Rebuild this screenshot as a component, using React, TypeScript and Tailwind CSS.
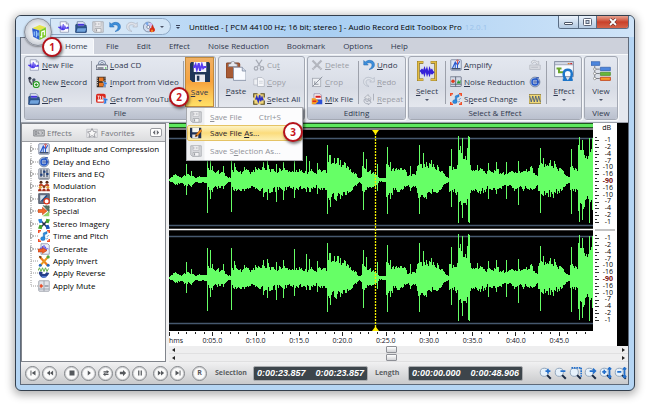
import type { ReactNode } from "react";

type IconProps = { name: string; className?: string };

const wave = "M2 8h1l1-2 1 4 1-6 1 8 1-9 1 9 1-7 1 5 1-3 1 1h1";

const ICONS: Record<string, ReactNode> = {
  logo: (
    <>
      <path d="M2 4l7-3 6 2-6 3z" fill="#e6e54a" />
      <path d="M2 4l7 2v9l-6-3z" fill="#2f5fd0" />
      <path d="M9 6l6-3v9l-6 3z" fill="#7ecb2a" />
      <path d="M4 7v4M6 6.500v6M7.500 8v3" stroke="#9fd0ff" fill="none" />
      <path d="M11 12V7.500l2.500-1v4" stroke="#fff" fill="none" />
      <circle cx="10.600" cy="12" r="1" fill="#fff" />
    </>
  ),
  newFile: (
    <>
      <path d="M3 1h8l3 3v11H3z" fill="#fafbff" stroke="#8b93ad" />
      <path d="M11 1v3h3" fill="#d5daea" stroke="#8b93ad" />
      <path d="M0 8h3l1-2 1 5 2-7 1 8 1-6 2 4 1-2h2v2h-4l-2 2H5z" fill="#4a35e8" stroke="#4a35e8" strokeWidth=".6" />
    </>
  ),
  open: (
    <>
      <path d="M3 1h8l2 2v6H3z" fill="#f4f6ff" stroke="#5f7396" />
      <path d="M4 5h8" stroke="#4433dd" strokeWidth="2.500" />
      <path d="M1 5l2-1v3h10V5l2 1v9H1z" fill="#315d9a" stroke="#1d3e70" />
      <path d="M1 15l2-6h13l-2 6z" fill="#6fa2dc" stroke="#1d3e70" />
    </>
  ),
  record: (
    <>
      <path d="M2 2v4c0 3 3 3 3 6M7 4v4c0 3 2 3 2 5" fill="none" stroke="#556" strokeWidth="2.200" />
      <circle cx="2.500" cy="3" r="2" fill="#333c4c" />
      <circle cx="8" cy="5" r="2" fill="#4a566a" />
      <circle cx="11" cy="11.500" r="4" fill="#fff" stroke="#279a22" strokeWidth="1.500" />
      <path d="M11 9.500v4M9 11.500h4" stroke="#279a22" strokeWidth="1.500" />
    </>
  ),
  cd: (
    <>
      <path d="M3 7a5 5 0 0110 0z" fill="#dfe8f5" stroke="#63718c" />
      <circle cx="8" cy="6" r="1.500" fill="#fff" stroke="#63718c" />
      <path d="M1 8h14l1 6H0z" fill="#eceff4" stroke="#4d566b" />
      <path d="M2 12h8" stroke="#333b4b" strokeWidth="1.500" />
      <circle cx="13" cy="12" r="1" fill="#2eb82e" />
    </>
  ),
  video: (
    <>
      <path d="M1 1h12v14H1z" fill="#3a2a22" />
      <path d="M4 2h6v5H4zM4 9h6v5H4z" fill="#e87722" />
      <path d="M2 2v12M12 2v12" stroke="#fff" strokeDasharray="1.500 1.500" />
      <path d="M9 7l6 2-1 3-1-1v3l-3 1 1-4z" fill="#2f7be0" stroke="#fff" strokeWidth=".5" />
    </>
  ),
  youtube: (
    <>
      <rect x="0" y="1" width="13" height="12" rx="2.500" fill="#d9281e" />
      <path d="M2 4h3M3.500 4v4M6 4v4M9 4v4" stroke="#fff" />
      <rect x="2" y="8.500" width="8" height="3" fill="#fff" />
      <path d="M9 6l7 2-1 3-1-1v4l-4 1 1-4z" fill="#2f7be0" stroke="#fff" strokeWidth=".5" />
    </>
  ),
  save: (
    <>
      <path d="M1 0h14l1 1v15H2l-2-2V1z" fill="#1f3658" />
      <path d="M3 0h10v8H3z" fill="#f4f4fb" />
      <path d="M2.500 4h1l1-2 1 4 1.500-5 1 6 1.500-5 1 3 1-1h1.500" fill="none" stroke="#5a3df0" strokeWidth="1.500" />
      <path d="M4 10h8v6H4z" fill="#e8e9ef" />
      <path d="M5.500 11h2v4h-2z" fill="#1f3658" />
    </>
  ),
  saveGray: (
    <>
      <path d="M1 1h14v14H3l-2-2z" fill="#d7d8dc" stroke="#a3a5ab" />
      <path d="M4 1h8v6H4z" fill="#f7f7f8" stroke="#b4b6bb" />
      <path d="M4 4h8" stroke="#a9abb1" strokeWidth="2" strokeDasharray="1 1" />
      <path d="M4 10h8v5H4z" fill="#f2f2f4" stroke="#a3a5ab" />
      <path d="M6 11v3" stroke="#96989f" strokeWidth="1.500" />
    </>
  ),
  saveAs: (
    <>
      <path d="M0 1h15v14H2l-2-2z" fill="#1f3154" />
      <path d="M3 1h9v6H3z" fill="#f6f5ef" />
      <path d="M3 10h8v5H3z" fill="#dfe1ea" />
      <path d="M7 13l1-3 6-7 2 2-6 7z" fill="#f08c1e" stroke="#8a4510" strokeWidth=".6" />
      <path d="M7 13l1-3 2 2z" fill="#42210b" />
    </>
  ),
  burn: (
    <>
      <circle cx="7" cy="8" r="6.500" fill="#cfdcf0" stroke="#6b7890" />
      <path d="M7 8L3 3a6 6 0 014-1.500z" fill="#7aa8e8" />
      <path d="M7 8l6-2a6 6 0 00-3-4z" fill="#d6b5ee" />
      <circle cx="7" cy="8" r="2" fill="#fff" stroke="#6b7890" />
      <path d="M11 15c-3-1-3-4-1-6 0 1 1 1 1 0 0-2 1-3 2-4 0 3 3 4 3 7 0 2-2 3-5 3z" fill="#d62d18" />
      <path d="M12 15c-2-1-1-3 0-4 1 1 2 3 0 4z" fill="#ffb02e" />
    </>
  ),
  undo: <path d="M1 2v6h6L5 6c3-2 7-1 7 2 0 2-1 4-4 6 6-1 8-4 7-8S8 0 3 4z" fill="#3d8fdb" stroke="#2367b0" strokeWidth=".7" />,
  redo: <path d="M15 2v6H9l2-2C8 4 4 5 4 8c0 2 1 4 4 6-6-1-8-4-7-8s7-6 12-2z" fill="#dfe3ea" stroke="#a9b0bd" strokeWidth=".8" />,
  repeat: (
    <>
      <path d="M7 2L2 6l5 3V7c2 0 3 1 2 4 3-4 1-7-2-7z" fill="#e2e4e9" stroke="#9da2ad" strokeWidth=".8" />
      <path d="M2 8c-2 4 1 7 5 6v2l4-4-4-3v2c-2 1-4 0-3-3zM14 1v9" fill="none" stroke="#9da2ad" />
    </>
  ),
  paste: (
    <>
      <rect x="0" y="1.500" width="11" height="12" rx="1" fill="#a85a34" stroke="#74371b" strokeWidth=".6" />
      <path d="M2 4.500V2.500L4 2c0-2.500 3-2.500 3 0l2 .5v2z" fill="#e6e8ee" stroke="#7d828d" strokeWidth=".6" />
      <path d="M6 5h7l3 3v7.500H6z" fill="#f9fbff" stroke="#8690a5" strokeWidth=".7" />
      <path d="M13 5v3h3" fill="#d3dbea" stroke="#8690a5" strokeWidth=".7" />
    </>
  ),
  cut: (
    <>
      <path d="M4 1l6 9M12 1L6 10" stroke="#a7abb5" strokeWidth="1.800" />
      <circle cx="4" cy="12.500" r="2.300" fill="none" stroke="#a7abb5" strokeWidth="1.600" />
      <circle cx="12" cy="12.500" r="2.300" fill="none" stroke="#a7abb5" strokeWidth="1.600" />
    </>
  ),
  copy: (
    <>
      <path d="M1 4h8v8H1z" fill="#eef0f4" stroke="#b6bac4" />
      <path d="M6 2h6l3 3v9H6z" fill="#f6f7fa" stroke="#b0b5c0" />
      <path d="M8 7h5M8 9.500h5" stroke="#c4c8d0" />
    </>
  ),
  selectAll: (
    <>
      <path d="M1 1h14v14H1z" fill="#f0d67a" />
      <path d="M3 8h1l1-3 2 6 2-8 1 8 2-5 1 3h1" stroke="#2a2fc4" fill="none" strokeWidth="2" />
      <path d="M1 6V1h5M10 1h5v5M1 10v5h5M15 10v5h-5" stroke="#5a4c1c" fill="none" strokeWidth="1.500" />
    </>
  ),
  del: <path d="M2 2l12 12M14 2L2 14" stroke="#b3b6be" strokeWidth="3" strokeDasharray="7 .5" />,
  crop: (
    <>
      <rect x="2" y="3" width="11" height="11" fill="#eceef2" stroke="#9ea3ad" />
      <path d="M2 14L15 1M5 7v4h5" stroke="#8f949f" strokeWidth="1.300" fill="none" />
    </>
  ),
  mix: (
    <>
      <path d="M4 1h8l2 2v6H4z" fill="#fdf3f3" stroke="#8f86a5" />
      <path d="M6 5h7" stroke="#d32222" strokeWidth="2.500" />
      <path d="M8 9h7v6H3z" fill="#2b4fd6" />
      <path d="M1 7h5l4 4-4 4H1z" fill="#f39a23" />
      <path d="M2 11h5" stroke="#e02a1a" strokeWidth="2" />
    </>
  ),
  select: (
    <>
      <path d="M5 1H1v14h4M11 1h4v14h-4" fill="none" stroke="#5b4a16" strokeWidth="2.200" />
      <path d="M5 1H1v14h4M11 1h4v14h-4" fill="none" stroke="#e3bd45" strokeWidth="1.500" />
      <path d="M2 8l1-1 1-1 1 1 1-3 1 3 1-3 1 4 1-4 1 3 1-1 1 2 1 1-1 1-1 1-1-1-1 3-1-3-1 3-1-4-1 4-1-3-1 1-1-2z" fill="#3522d8" />
    </>
  ),
  amplify: (
    <>
      <rect x="1" y="1" width="14" height="14" rx="1" fill="#dce6f6" stroke="#6d7891" />
      <path d="M3 13l4-9 3 4 3-5M7 4v9M10 8v5" stroke="#2a5ad0" fill="none" strokeWidth="1.400" />
      <path d="M8 3l2-2 2 2M10 2v5" stroke="#d82a1d" fill="none" />
      <path d="M2 13h12" stroke="#42506e" strokeWidth="2" />
    </>
  ),
  noise: (
    <>
      <rect x="0" y="1" width="15" height="13" rx="1" fill="#d3d9e6" stroke="#5d6579" />
      <path d="M7.500 1v13M1 11h14" stroke="#4a5163" />
      <circle cx="4" cy="7" r="2.300" fill="#e03a1b" />
      <path d="M9 10l2-5 1 3 2-3v5z" fill="#249a2d" />
    </>
  ),
  speed: (
    <>
      <path d="M1 4V1h3M12 1h3v3M1 12v3h3M15 12v3h-3" fill="none" stroke="#f0502a" strokeWidth="2" />
      <path d="M7 12V4l5-2v3L9 6v6" fill="#2c8de0" stroke="#1b63ad" strokeWidth=".6" />
      <ellipse cx="6.500" cy="11.500" rx="3" ry="2.500" fill="#2c8de0" stroke="#1b63ad" strokeWidth=".6" />
      <path d="M12 9l2-2M11 12l2-1" stroke="#1b63ad" />
    </>
  ),
  fade: (
    <>
      <path d="M1 8h14v6H1z" fill="#d8dae0" stroke="#b6bac2" />
      <path d="M3 5c0-4 6-4 8-1l2-1v4H9l1-1C8 3 6 4 5 6zM3 11h9" fill="#e6e8ec" stroke="#b0b4bd" />
    </>
  ),
  delay: (
    <>
      <circle cx="8" cy="8" r="6.500" fill="#b8cdf0" stroke="#62708c" />
      <circle cx="8" cy="8" r="4" fill="none" stroke="#2156c8" strokeWidth="2" />
      <circle cx="8" cy="8" r="1.500" fill="#fff" stroke="#17348a" />
      <path d="M9 3l4-1M10 8h4" stroke="#1c43a7" strokeWidth="1.500" />
    </>
  ),
  eqGold: (
    <>
      <rect x="0" y="2" width="16" height="12" fill="#f0d876" stroke="#8a7a3c" />
      <path d="M1 4l2 8 2-8 2 8 2-8 2 8 2-8 2 8" fill="none" stroke="#3e5580" strokeWidth="1.100" />
    </>
  ),
  effect: (
    <>
      <path d="M.5.500h15v12H.5z" fill="#f7faff" stroke="#7a8499" strokeWidth=".7" />
      <path d="M.5.500h15v2.500H.5z" fill="#d4dae6" stroke="#7a8499" strokeWidth=".5" />
      <path d="M11 2h1.500" stroke="#e07a2d" />
      <path d="M13 2h1.500" stroke="#d12d2d" />
      <path d="M2 6h4M4 6v3h4" fill="none" stroke="#6ca62d" strokeWidth="1.600" />
      <path d="M7 15h2.500c-3-4-2-8 1.500-8s4.500 4 1.500 8H15" fill="none" stroke="#1d75c9" strokeWidth="1.900" />
    </>
  ),
  view: (
    <>
      <path d="M0 .5h7v3H0z" fill="#4d86dd" stroke="#2b57a4" strokeWidth=".5" />
      <path d="M3 4v10M3 6.500h4M3 10h4M3 14h4" stroke="#7a7f8a" fill="none" strokeWidth=".8" />
      <circle cx="3" cy="6.500" r="1" fill="#fff" stroke="#777" strokeWidth=".5" />
      <circle cx="3" cy="10" r="1" fill="#fff" stroke="#777" strokeWidth=".5" />
      <circle cx="3" cy="14" r="1" fill="#fff" stroke="#777" strokeWidth=".5" />
      <path d="M7.500 5h8v2.700h-8z" fill="#4d86dd" stroke="#2b57a4" strokeWidth=".5" />
      <path d="M7.500 9h8v2.500h-8z" fill="#68b93a" stroke="#3f7f1c" strokeWidth=".5" />
      <path d="M7.500 13h8v2.500h-8z" fill="#f59a2a" stroke="#c1421a" strokeWidth=".7" />
    </>
  ),
  filters: (
    <>
      <rect x="1" y="1" width="14" height="14" rx="1" fill="#d4d9e2" stroke="#7a8190" />
      <path d="M4 2v10M8 2v10M12 2v10" stroke="#2f3a52" strokeWidth="1.400" />
      <path d="M3 9h3M7 5h3M11 8h3" stroke="#1d3d7c" strokeWidth="2.400" />
      <path d="M2 14h12" stroke="#8b919d" strokeWidth="2" />
    </>
  ),
  modulation: (
    <>
      <circle cx="4" cy="3" r="2" fill="#5a2a14" />
      <circle cx="12" cy="3" r="2" fill="#5a2a14" />
      <path d="M1 8c0-4 6-4 6 0zM9 8c0-4 6-4 6 0z" fill="#c0462a" />
      <circle cx="3" cy="9.500" r="2" fill="#e7a23a" />
      <circle cx="8" cy="8.500" r="2" fill="#8a3a14" />
      <circle cx="13" cy="9.500" r="2" fill="#e7a23a" />
      <path d="M0 15c0-5 5-5 5 0zM5.500 15c0-5 5-5 5 0zM11 15c0-5 5-5 5 0z" fill="#a8321e" />
    </>
  ),
  restoration: (
    <>
      <rect x="1" y="1" width="14" height="13" fill="#6b7587" stroke="#3c4455" />
      <path d="M3 3h8l-8 8z" fill="#d7e3ee" />
      <path d="M12 3l-7 8" stroke="#224f8d" strokeWidth="2" />
      <circle cx="11.500" cy="11" r="3.500" fill="#fff" stroke="#d9371c" strokeWidth="1.700" />
    </>
  ),
  special: (
    <>
      <path d="M7 1h8v9z" fill="#557565" stroke="#2e4b3d" strokeDasharray="1 1" />
      <path d="M6 15h9V8z" fill="#8fd069" />
      <path d="M0 6h6V3l6 5-6 5v-3H0z" fill="#f2682a" stroke="#b93c10" strokeWidth=".7" />
    </>
  ),
  stereo: (
    <>
      <path d="M2 2l12 12M3 13L13 3" stroke="#1f2c47" strokeWidth="2" />
      <path d="M0 2l5-1 1 5-4 1z" fill="#2b86e0" />
      <path d="M16 2l-5-1-1 5 4 1z" fill="#45a52d" />
      <path d="M0 14l5 1 1-5-4-1z" fill="#45a52d" />
      <path d="M16 14l-5 1-1-5 4-1z" fill="#1c57b8" />
    </>
  ),
  generate: (
    <>
      <path d="M4 1h9l2 2v12H4z" fill="#eef1fa" stroke="#8088a0" />
      <path d={wave} fill="none" stroke="#5347e0" />
      <path d="M0 8h6V6l6 4-6 4v-2H0z" fill="#f0602a" stroke="#b93c10" strokeWidth=".7" />
    </>
  ),
  invert: (
    <>
      <path d="M2 2l11 12" stroke="#f07c1c" strokeWidth="3" />
      <path d="M14 2L3 14" stroke="#e89b20" strokeWidth="2.500" />
      <path d="M1 1l4 1-2 3z" fill="#5d4022" />
      <circle cx="13.500" cy="2.500" r="2.200" fill="#57a53c" />
      <circle cx="3" cy="13.500" r="2" fill="#2769bd" />
      <circle cx="13.500" cy="13.500" r="2" fill="#2769bd" />
    </>
  ),
  reverse: (
    <>
      <path d="M0 5l2-4 2 5 2-5 2 5 2-5 2 5 2-4" fill="none" stroke="#58a83a" strokeWidth="1.200" />
      <path d="M1 8c2 8 10 9 14 0l-4-1c-1 3-4 3-6 1l2-1-5-1z" fill="#25408a" />
      <path d="M5 13h6" stroke="#4f78d2" strokeWidth="2" />
    </>
  ),
  mute: (
    <>
      <rect x="1" y="1" width="14" height="14" rx="1" fill="#e3e5ea" stroke="#8c919c" />
      <path d="M8 1v14M1 12h14" stroke="#8c919c" />
      <path d="M2 8l2-3 3 3-3 3z" fill="#e8502a" />
      <path d="M9 8h5" stroke="#6c7280" strokeWidth="1.500" />
    </>
  ),
  effectsTab: <path d="M1 4h14v8H1zM3 6v4h2V6zM7 6v3h2M11 6l2 2-2 2" fill="#c9cacd" stroke="#7f8186" strokeWidth="1.200" />,
  star: (
    <>
      <path d="M1 3h14v11H1z" fill="#ececee" stroke="#b9bbc0" />
      <path d="M8 2l2 4 4 .5-3 3 1 4-4-2-4 2 1-4-3-3L6 6z" fill="#f8f8f8" stroke="#85878d" />
    </>
  ),
};

const Icon = ({ name, className = "size-[12px]" }: IconProps) => (
  <svg viewBox="0 0 16 16" className={`shrink-0 ${className}`} aria-hidden="true">
    {ICONS[name]}
  </svg>
);

// Underlines the access key at the given index.
const KeyLabel = ({ text, at }: { text: string; at: number }) => (
  <span className="whitespace-pre">
    {text.slice(0, at)}
    <span className="underline underline-offset-1">{text[at]}</span>
    {text.slice(at + 1)}
  </span>
);

type Command = { icon: string; text: string; at: number; off?: boolean };

const CommandList = ({ items, className }: { items: Command[]; className: string }) => (
  <div className={`flex flex-col shrink-0 ${className}`}>
    {items.map(item => (
      <button
        key={item.text}
        disabled={item.off}
        className={`flex flex-1 items-center gap-[2px] ${item.off ? "text-[#9a9da6]" : "text-[#30384e]"}`}
      >
        <Icon name={item.icon} />
        <KeyLabel text={item.text} at={item.at} />
      </button>
    ))}
  </div>
);

type BigButtonProps = { icon: string; text: string; at?: number; arrow?: boolean; className: string };

const BigButton = ({ icon, text, at = 0, arrow = true, className }: BigButtonProps) => (
  <button className={`flex flex-col items-center shrink-0 h-[50px] pt-1 text-[#30384e] ${className}`}>
    <Icon name={icon} className="size-[20px]" />
    <span className="mt-[4px] leading-[12px]">
      {at < 0 ? text : <KeyLabel text={text} at={at} />}
    </span>
    {arrow && (
      <span className="mt-[2px] border-x-2 border-x-transparent border-t-2 border-t-[#4c5468]" />
    )}
  </button>
);

const Separator = () => <div className="w-px h-[43px] mt-1 bg-[#9da1ab] shrink-0" />;

type GroupProps = { title: string; className: string; children: ReactNode };

const Group = ({ title, className, children }: GroupProps) => (
  <section
    className={`shrink-0 rounded-[3px] border border-[#a3a8b3] bg-linear-to-b from-[#e4e8f0] via-[#d8dce5] to-[#eceef3] shadow-[1px_1px_0_#f7f8fa] ${className}`}
  >
    <div className="flex h-[50px]">{children}</div>
    <h2 className="h-[12px] rounded-b-[2px] bg-linear-to-b from-[#ccd1dc] to-[#bac0ce] text-center leading-[12px] text-[#30384e]">
      {title}
    </h2>
  </section>
);

const TABS = ["File", "Edit", "Effect", "Noise Reduction", "Bookmark", "Options", "Help"];

const QUICK = ["newFile", "open", "saveGray", "undo", "redo", "burn"];

const TitleBar = () => (
  <header className="flex items-center h-[21px] pl-[34px] bg-linear-to-r from-[#d3e6f8] via-[#a9cff3] to-[#cfe4f8]">
    <div className="flex items-center gap-[5px] h-[17px] pl-[7px] w-[121px] rounded-r-full border border-[#8fa9c6] bg-[#d9e8f7]/70">
      {QUICK.map(name => (
        <button key={name} aria-label={name}>
          <Icon name={name} />
        </button>
      ))}
      <span className="border-x-2 border-x-transparent border-t-2 border-t-[#4c5468]" />
    </div>
    <span className="ml-[5px] border-t border-[#39435a] pt-px">
      <span className="block border-x-2 border-x-transparent border-t-2 border-t-[#39435a]" />
    </span>
    <h1 className="ml-[9px] text-[8px] font-medium text-black whitespace-pre">
      Untitled - [ PCM 44100 Hz; 16 bit; stereo ] - Audio Record Edit Toolbox Pro
    </h1>
    <span className="ml-[3px] text-[#9cc3ea]">12.0.1</span>
    <div className="flex self-start ml-auto mr-[5px] h-[13px] rounded-b-[3px] border border-t-0 border-[#5a6d84] overflow-hidden">
      <button aria-label="Minimize" className="grid place-items-center w-[19px] bg-linear-to-b from-[#eaf2fb] to-[#b4cae2]">
        <span className="mt-[2px] w-[9px] h-[3px] rounded-[1px] border border-[#4c5566] bg-white" />
      </button>
      <button aria-label="Maximize" className="grid place-items-center w-[19px] border-x border-[#5a6d84] bg-linear-to-b from-[#eaf2fb] to-[#b4cae2]">
        <svg viewBox="0 0 9 8" className="w-[9px] h-[8px]">
          <rect x=".5" y=".5" width="8" height="7" rx="1" fill="#fff" stroke="#5c6577" />
          <rect x="3" y="2.500" width="3" height="3" fill="#c6d6e8" stroke="#5c6577" />
        </svg>
      </button>
      <button aria-label="Close" className="grid place-items-center w-[31px] bg-linear-to-b from-[#e6a18f] via-[#c9402a] to-[#d5644a]">
        <svg viewBox="0 0 10 8" className="w-[10px] h-[8px]">
          <path d="M2 1l6 6M8 1L2 7" stroke="#5a2a2a" strokeWidth="3" />
          <path d="M2 1l6 6M8 1L2 7" stroke="#fff" strokeWidth="1.800" />
        </svg>
      </button>
    </div>
  </header>
);

const TabRow = () => (
  <nav className="flex h-[17px] pl-[38px] bg-[#cdd1db] border-t border-[#6c7484] text-[#30384e]">
    <button className="w-[35px] pl-[6px] text-left bg-[#eff2f7] rounded-t-[2px] border-r border-[#f9fafc]">Home</button>
    <div className="flex gap-[18px] pl-[12px]">
      {TABS.map(tab => (
        <button key={tab} className="whitespace-pre">{tab}</button>
      ))}
    </div>
  </nav>
);

const SaveMenu = () => (
  <ul className="absolute left-[162px] top-[51px] z-10 w-[117px] border border-[#a6a8ad] bg-linear-to-r from-[#eeeff1] from-[17px] to-[#fcfcfd] to-[18px] text-[#8f9198] shadow-[2px_2px_2px_rgba(0,0,0,.45)]">
    <li>
      <button disabled className="flex items-center w-full h-[17px] pl-[3px]">
        <Icon name="saveGray" />
        <span className="ml-[8px]"><KeyLabel text="Save File" at={0} /></span>
        <span className="ml-auto mr-[21px]">Ctrl+S</span>
      </button>
    </li>
    <li>
      <button className="flex items-center w-full h-[16px] pl-[2px] border border-[#e5c365] rounded-[2px] bg-linear-to-b from-[#fdf3c4] via-[#fbdc7c] to-[#fdeeb0] text-[#1c2030]">
        <Icon name="saveAs" />
        <span className="ml-[8px]"><KeyLabel text="Save File As..." at={10} /></span>
      </button>
    </li>
    <li>
      <button disabled className="flex items-center w-full h-[19px] pl-[3px]">
        <Icon name="saveGray" />
        <span className="ml-[8px]"><KeyLabel text="Save Selection As..." at={6} /></span>
      </button>
    </li>
  </ul>
);

const Ribbon = () => (
  <div className="flex items-start gap-[2px] h-[69px] px-[3px] pt-px bg-[#e4e8ef] border-y border-t-[#f7f9fb] border-b-[#9ba0aa]">
    <div className="relative shrink-0">
      <Group title="File" className="w-[192px]">
        <CommandList
          className="w-[66px] pl-[3px]"
          items={[
            { icon: "newFile", text: "New File", at: 0 },
            { icon: "record", text: "New Record", at: 4 },
            { icon: "open", text: "Open", at: 0 },
          ]}
        />
        <Separator />
        <CommandList
          className="w-[91px] pl-[4px]"
          items={[
            { icon: "cd", text: "Load CD", at: 0 },
            { icon: "video", text: "Import from Video", at: 0 },
            { icon: "youtube", text: "Get from YouTube", at: 0 },
          ]}
        />
        <Separator />
        <BigButton
          icon="save"
          text="Save"
          className="ml-px w-[29px] border border-[#c08a3c] bg-linear-to-b from-[#f0b063] via-[#f6a33e] to-[#ffe066]"
        />
      </Group>
      <SaveMenu />
    </div>
    <Group title="" className="w-[87px]">
      <BigButton icon="paste" text="Paste" arrow={false} className="w-[34px]" />
      <CommandList
        items={[
          { icon: "cut", text: "Cut", at: 2, off: true },
          { icon: "copy", text: "Copy", at: 0, off: true },
          { icon: "selectAll", text: "Select All", at: 0 },
        ]}
        className="w-[51px]"
      />
    </Group>
    <Group title="Editing" className="w-[99px]">
      <CommandList
        className="w-[50px] pl-[3px]"
        items={[
          { icon: "del", text: "Delete", at: 0, off: true },
          { icon: "crop", text: "Crop", at: 0, off: true },
          { icon: "mix", text: "Mix File", at: 0 },
        ]}
      />
      <Separator />
      <CommandList
        className="pl-[4px]"
        items={[
          { icon: "undo", text: "Undo", at: 0 },
          { icon: "redo", text: "Redo", at: 0, off: true },
          { icon: "repeat", text: "Repeat", at: 0, off: true },
        ]}
      />
    </Group>
    <Group title="Select & Effect" className="w-[174px]">
      <BigButton icon="select" text="Select" className="w-[36px]" />
      <Separator />
      <CommandList
        className="w-[78px] pl-[4px]"
        items={[
          { icon: "amplify", text: "Amplify", at: 0 },
          { icon: "noise", text: "Noise Reduction", at: 0 },
          { icon: "speed", text: "Speed Change", at: 1 },
        ]}
      />
      <div className="flex flex-col w-[22px] items-center">
        {["fade", "delay", "eqGold"].map(name => (
          <button key={name} aria-label={name} className="flex flex-1 items-center">
            <Icon name={name} />
          </button>
        ))}
      </div>
      <Separator />
      <BigButton icon="effect" text="Effect" className="w-[34px]" />
    </Group>
    <Group title="View" className="w-[34px]">
      <BigButton icon="view" text="View" at={-1} className="w-[32px]" />
    </Group>
  </div>
);

const TREE = [
  { icon: "amplify", text: "Amplitude and Compression", open: true },
  { icon: "delay", text: "Delay and Echo", open: true },
  { icon: "filters", text: "Filters and EQ", open: true },
  { icon: "modulation", text: "Modulation", open: true },
  { icon: "restoration", text: "Restoration", open: true },
  { icon: "special", text: "Special", open: true },
  { icon: "stereo", text: "Stereo Imagery", open: true },
  { icon: "speed", text: "Time and Pitch", open: true },
  { icon: "generate", text: "Generate", open: true },
  { icon: "invert", text: "Apply Invert" },
  { icon: "reverse", text: "Apply Reverse" },
  { icon: "mute", text: "Apply Mute" },
];

const Sidebar = () => (
  <aside className="flex flex-col w-[145px] shrink-0 border border-[#80848b] bg-white">
    <div className="flex items-center h-[18px] px-[11px] border-b border-[#9b9da2] bg-linear-to-b from-[#f4f4f5] to-[#dcdddf] text-[#75777d]">
      <button className="flex items-center gap-[2px]">
        <Icon name="effectsTab" />
        Effects
      </button>
      <button className="flex items-center gap-[3px] ml-[14px]">
        <Icon name="star" />
        Favorites
      </button>
      <button aria-label="Scroll tabs" className="grid place-items-center ml-auto -mr-[8px] w-[12px] h-[9px] rounded-[2px] border border-[#9a9ca1] bg-white">
        <svg viewBox="0 0 10 6" className="w-[8px] h-[5px]">
          <path d="M4 0v6L1 3zM6 0v6l3-3z" fill="#6a6c72" />
        </svg>
      </button>
    </div>
    <ul className="flex flex-col h-[149px] mt-px pl-[8px] font-medium text-black">
      {TREE.map(node => (
        <li key={node.text} className="flex flex-1 items-center">
          <svg viewBox="0 0 8 12" className="w-[8px] h-[12px] shrink-0">
            <path d={node.text === "Apply Mute" ? "M1 0v6" : "M1 0v12"} stroke="#9a9a9a" strokeDasharray="1 1" />
            <path d="M1 6h7" stroke="#9a9a9a" strokeDasharray="1 1" />
            {node.open && <path d="M.5 3.500v5l3-2.500z" fill="#fff" stroke="#8a8a8a" strokeWidth=".8" />}
          </svg>
          <Icon name={node.icon} />
          <span className="ml-[3px] whitespace-pre">{node.text}</span>
        </li>
      ))}
    </ul>
  </aside>
);

const W = 424;

// [x, amplitude] of the quiet body of the signal
const BODY = [
  [0, 2], [6, 6], [12, 3], [17, 7], [21, 7], [26, 3], [37, 4], [38, 13], [44, 11], [50, 9], [54, 10], [57, 4],
  [61, 2], [62, 12], [67, 12], [75, 12], [83, 9], [90, 13], [98, 15], [107, 11], [115, 13], [122, 9], [128, 12],
  [134, 8], [141, 14], [147, 7], [153, 13], [157, 10], [158, 22], [170, 20], [180, 14], [186, 7], [190, 2],
  [192, 4], [193, 16], [199, 10], [204, 9], [210, 2], [216, 2], [217, 18], [226, 13], [232, 14], [238, 8],
  [246, 8], [249, 20], [262, 17], [270, 13], [276, 5], [279, 3], [280, 15], [288, 15], [289, 36], [294, 26],
  [299, 34], [301, 13], [310, 14], [320, 10], [330, 11], [336, 6], [345, 10], [354, 10], [362, 13], [368, 5],
  [370, 17], [383, 17], [392, 13], [400, 3], [401, 14], [408, 12], [409, 38], [414, 34], [418, 22], [422, 36], [424, 36],
];

// [x, up, down] of the transients
const PEAKS = [
  [17, 16, 15], [22, 9, 7], [38, 30, 33], [41, 28, 19], [43, 14, 12], [54, 14, 9], [62, 30, 32], [65, 17, 11],
  [75, 13, 11], [86, 13, 9], [94, 18, 17], [98, 19, 20], [107, 16, 22], [114, 18, 20], [125, 29, 18], [137, 24, 12],
  [140, 19, 12], [148, 17, 14], [158, 35, 34], [161, 25, 27], [165, 22, 19], [171, 20, 19], [176, 17, 15],
  [194, 28, 30], [197, 21, 10], [208, 16, 11], [218, 33, 34], [221, 18, 19], [241, 14, 11], [250, 35, 34],
  [254, 27, 17], [257, 18, 19], [262, 20, 14], [282, 31, 27], [289, 44, 43], [293, 42, 38], [299, 44, 42],
  [300, 43, 43], [308, 15, 12], [319, 17, 19], [327, 18, 14], [337, 18, 19], [349, 19, 25], [361, 13, 8],
  [371, 32, 33], [374, 22, 16], [381, 20, 17], [385, 19, 12], [402, 31, 34], [410, 43, 42], [413, 40, 40],
  [420, 42, 43], [423, 42, 30],
];

const noise = (n: number) => {
  const s = Math.sin(n * 127.1) * 43758.5453;
  return s - Math.floor(s);
};

const bodyAt = (x: number) => {
  const i = Math.max(1, BODY.findIndex(p => p[0] > x));
  const [x0, a0] = BODY[i - 1];
  const [x1, a1] = BODY[i];
  return a0 + ((a1 - a0) * (x - x0)) / (x1 - x0);
};

const wavePath = (mid: number) => {
  let d = "";
  for (let x = 0; x < W; x++) {
    const peak = PEAKS.find(p => p[0] === x);
    const body = bodyAt(x);
    const up = peak ? peak[1] : body * (0.5 + 0.3 * noise(x) + 0.35 * noise(x >> 1));
    const down = peak ? peak[2] : body * (0.5 + 0.3 * noise(x + 900) + 0.3 * noise((x >> 1) + 500));
    d += `M${x + 0.5} ${Math.round(mid - Math.max(1, up))}V${Math.round(mid + Math.max(1, down))}`;
  }
  return d;
};

const Wave = () => (
  <svg viewBox="0 0 424 201" preserveAspectRatio="none" className="block w-full h-[201px] bg-black">
    <path d="M0 8.500h424M0 95.500h424M0 106.500h424M0 193.500h424" stroke="#46586e" strokeWidth="1.500" />
    <path d="M0 99.500h424" stroke="#fff" strokeWidth="1.500" />
    <g stroke="#66ff66" shapeRendering="crispEdges">
      <path d={wavePath(50)} />
      <path d={wavePath(148)} />
    </g>
    <path d="M206.500 3v195" stroke="#f5f000" strokeWidth="1.300" strokeDasharray="2 1" />
    <path d="M203 0h7l-3 4h-1zM203 201h7l-3-4h-1z" fill="#ffee00" />
  </svg>
);

const MARKS = ["0:05.0", "0:10.0", "0:15.0", "0:20.0", "0:25.0", "0:30.0", "0:35.0", "0:40.0", "0:45.0"];

const TimeRuler = () => (
  <div className="h-[15px] bg-white">
    <svg viewBox="0 0 424 5" preserveAspectRatio="none" className="block w-full h-[5px]">
      {Array.from({ length: 49 }, (_, i) => (
        <path key={i} d={`M${Math.round(i * 8.66) + 0.5} 1v${i % 5 ? 2 : 4}`} stroke="#222" />
      ))}
    </svg>
    <div className="flex text-[7px] leading-[9px] font-medium text-[#112]">
      <span className="flex-[2.5_1_0]">hms</span>
      {MARKS.map(mark => (
        <span key={mark} className="flex-[5_1_0] text-center">{mark}</span>
      ))}
      <span className="flex-[1.4_1_0]" />
    </div>
  </div>
);

const LEVELS = ["-1", "-2", "-4", "-7", "-10", "-16", "-90", "-16", "-10", "-7", "-4", "-2", "-1"];

const DbChannel = () => (
  <div className="flex h-[88px]">
    <svg viewBox="0 0 6 88" className="w-[6px] h-[88px]">
      {Array.from({ length: 26 }, (_, i) => (
        <path key={i} d={`M0 ${Math.round(i * 3.4) + 0.5}h${i % 2 ? 4 : 2}`} stroke="#333" />
      ))}
    </svg>
    <div className="flex flex-col w-[14px] text-[7px] font-medium text-center text-black">
      {LEVELS.map((level, i) => (
        <span key={i} className={`flex flex-1 items-center justify-center leading-[6px] ${i === 6 ? "text-[#7a1010] font-bold" : ""}`}>
          {level}
        </span>
      ))}
    </div>
  </div>
);

const DbScale = () => (
  <div className="w-[24px] shrink-0 pl-[2px] bg-white">
    <div className="h-[14px] pr-[6px] pt-px text-right text-[7px] leading-[7px] font-medium text-black">dB</div>
    <DbChannel />
    <div className="h-[2px] my-[4px] mr-[2px] bg-[#c4c4c4]" />
    <DbChannel />
  </div>
);

const Scroller = ({ label }: { label: string }) => (
  <div role="group" aria-label={label} className="flex items-center h-[8px] px-[3px] bg-[#eeeeef] border-b border-[#e0e0e1]">
    <button aria-label={`${label} left`} className="border-y-2 border-y-transparent border-r-3 border-r-[#222]" />
    <span className="flex-[48_1_0]" />
    <span className="w-[11px] h-[7px] rounded-[1px] border border-[#8e9096] bg-linear-to-b from-white to-[#d2d3d6]" />
    <span className="flex-[51_1_0]" />
    <button aria-label={`${label} right`} className="border-y-2 border-y-transparent border-l-3 border-l-[#222]" />
  </div>
);

const Editor = () => (
  <main className="flex flex-col flex-1 min-w-0 ml-[3px]">
    <div className="flex bg-black">
      <div className="flex-1 min-w-0">
        <div className="h-[5px] border-y border-[#1d5a1d] bg-[#5de85d]" />
        <div className="h-[2px] bg-[#807c82]" />
        <Wave />
        <TimeRuler />
      </div>
      <DbScale />
      <div className="w-[11px] shrink-0" />
    </div>
    <Scroller label="Position" />
    <Scroller label="Zoom" />
  </main>
);

const TRANSPORT: Record<string, string> = {
  start: "M4 4h1.500v8H4zM12 4v8L6 8z",
  rewind: "M8 4v8L3 8zM13 4v8L8 8z",
  stop: "M4 4h8v8H4z",
  play: "M6 4v8l5-4z",
  loop: "M4 7V5h5V3l4 3-4 3V7zM12 9v2H7v2l-4-3 4-3v2z",
  next: "M3 6h5V3l5 5-5 5v-3H3z",
  pause: "M5 4h2v8H5zM9 4h2v8H9z",
  forward: "M3 4v8l5-4zM8 4v8l5-4z",
  end: "M4 4v8l6-4zM10.500 4H12v8h-1.500z",
};

const RoundButton = ({ name, children }: { name: string; children?: ReactNode }) => (
  <button
    aria-label={name}
    className="grid place-items-center shrink-0 size-[15px] rounded-full border border-[#7f8286] bg-[#fafafa] text-[7px] font-bold text-[#55585c] ring-1 ring-[#d2d3d5] ring-inset"
  >
    {children ?? (
      <svg viewBox="0 0 16 16" className="size-[10px]">
        <path d={TRANSPORT[name]} fill="#55585c" />
      </svg>
    )}
  </button>
);

const TimeBox = ({ from, to }: { from: string; to: string }) => (
  <output className="flex items-center justify-between shrink-0 w-[115px] h-[15px] px-[3px] rounded-[2px] border border-[#a9abae] bg-[#3d454b] font-['Liberation_Sans',Arial,sans-serif] text-[9px] font-bold italic text-white">
    <span>{from}</span>
    <span>{to}</span>
  </output>
);

const ZOOMS = [
  "M11 2v6M8 5h6",
  "M8 5h6",
  "M3 1h12v12",
  "M7 5h7M11 2l3 3-3 3",
  "M4 6h5M6.500 3.500v5M13 1v12M11 3l2-2 2 2M11 11l2 2 2-2",
  "M4 6h5M13 1v12M11 3l2-2 2 2M11 11l2 2 2-2",
];

const BottomBar = () => (
  <footer className="flex items-center h-[22px] pl-[4px] pr-px bg-linear-to-b from-[#f1f1f2] to-[#c9cacc]">
    <div className="flex gap-[2px]">
      <RoundButton name="start" />
      <RoundButton name="rewind" />
    </div>
    <div className="flex gap-[2px] ml-[7px]">
      {["stop", "play", "loop", "next", "pause"].map(name => (
        <RoundButton key={name} name={name} />
      ))}
    </div>
    <div className="flex gap-[2px] ml-[6px] mr-[7px]">
      <RoundButton name="forward" />
      <RoundButton name="end" />
    </div>
    <RoundButton name="record">R</RoundButton>
    <span className="w-[46px] shrink-0 pl-[8px] text-[7px] font-bold text-[#5c5f63]">Selection</span>
    <TimeBox from="0:00:23.857" to="0:00:23.857" />
    <span className="w-[40px] shrink-0 pl-[7px] text-[7px] font-bold text-[#5c5f63]">Length</span>
    <TimeBox from="0:00:00.000" to="0:00:48.906" />
    <div className="flex gap-[2px] ml-auto">
      {ZOOMS.map((d, i) => (
        <button key={d} aria-label={`Zoom ${i + 1}`}>
          <svg viewBox="0 0 16 16" className="size-[13px]">
            <circle cx="6.500" cy="6.500" r="5" fill="#e6f1fb" stroke="#8fa3ba" strokeWidth="1.200" />
            <path d="M10 10l4.500 4.500" stroke="#1d2c44" strokeWidth="2.500" />
            <path d={d} fill="none" stroke="#2470cc" strokeWidth="2" strokeDasharray={i === 2 ? "2 1" : undefined} />
          </svg>
        </button>
      ))}
    </div>
  </footer>
);

const Callout = ({ n, className }: { n: number; className: string }) => (
  <span
    className={`absolute z-20 grid place-items-center size-[20px] rounded-full border-2 border-[#b5121b] bg-white text-[10px] font-bold text-[#c8141c] shadow-[1px_2px_3px_rgba(0,0,0,.5)] ${className}`}
  >
    {n}
  </span>
);

const App = () => (
  <div className="bg-white p-[15px] font-['Open_Sans','Noto_Sans',sans-serif] text-[8px] leading-[12px]">
    <div className="relative rounded-[6px] border border-[#333f4d] bg-[#b5d5f3] shadow-[0_2px_8px_2px_rgba(0,0,0,.3)]">
      <div className="overflow-hidden rounded-[5px]">
        <TitleBar />
        <div className="ml-[4px] mr-[5px] mb-[5px] border border-t-0 border-[#5e6a7a] bg-[#f0f0f1]">
          <TabRow />
          <Ribbon />
          <div className="flex">
            <Sidebar />
            <Editor />
          </div>
          <BottomBar />
        </div>
      </div>
      <button aria-label="Application menu" className="absolute left-[8px] top-[2px] grid place-items-center size-[28px] rounded-full border border-[#8a909b] bg-radial from-[#fdfdfe] via-[#e1e4e9] to-[#a8adb8] shadow-[0_1px_2px_rgba(0,0,0,.4)]">
        <Icon name="logo" className="size-[17px]" />
      </button>
      <Callout n={1} className="left-[26px] top-[21px]" />
      <Callout n={2} className="left-[153px] top-[71px]" />
      <Callout n={3} className="left-[267px] top-[106px]" />
    </div>
  </div>
);

export default App;
